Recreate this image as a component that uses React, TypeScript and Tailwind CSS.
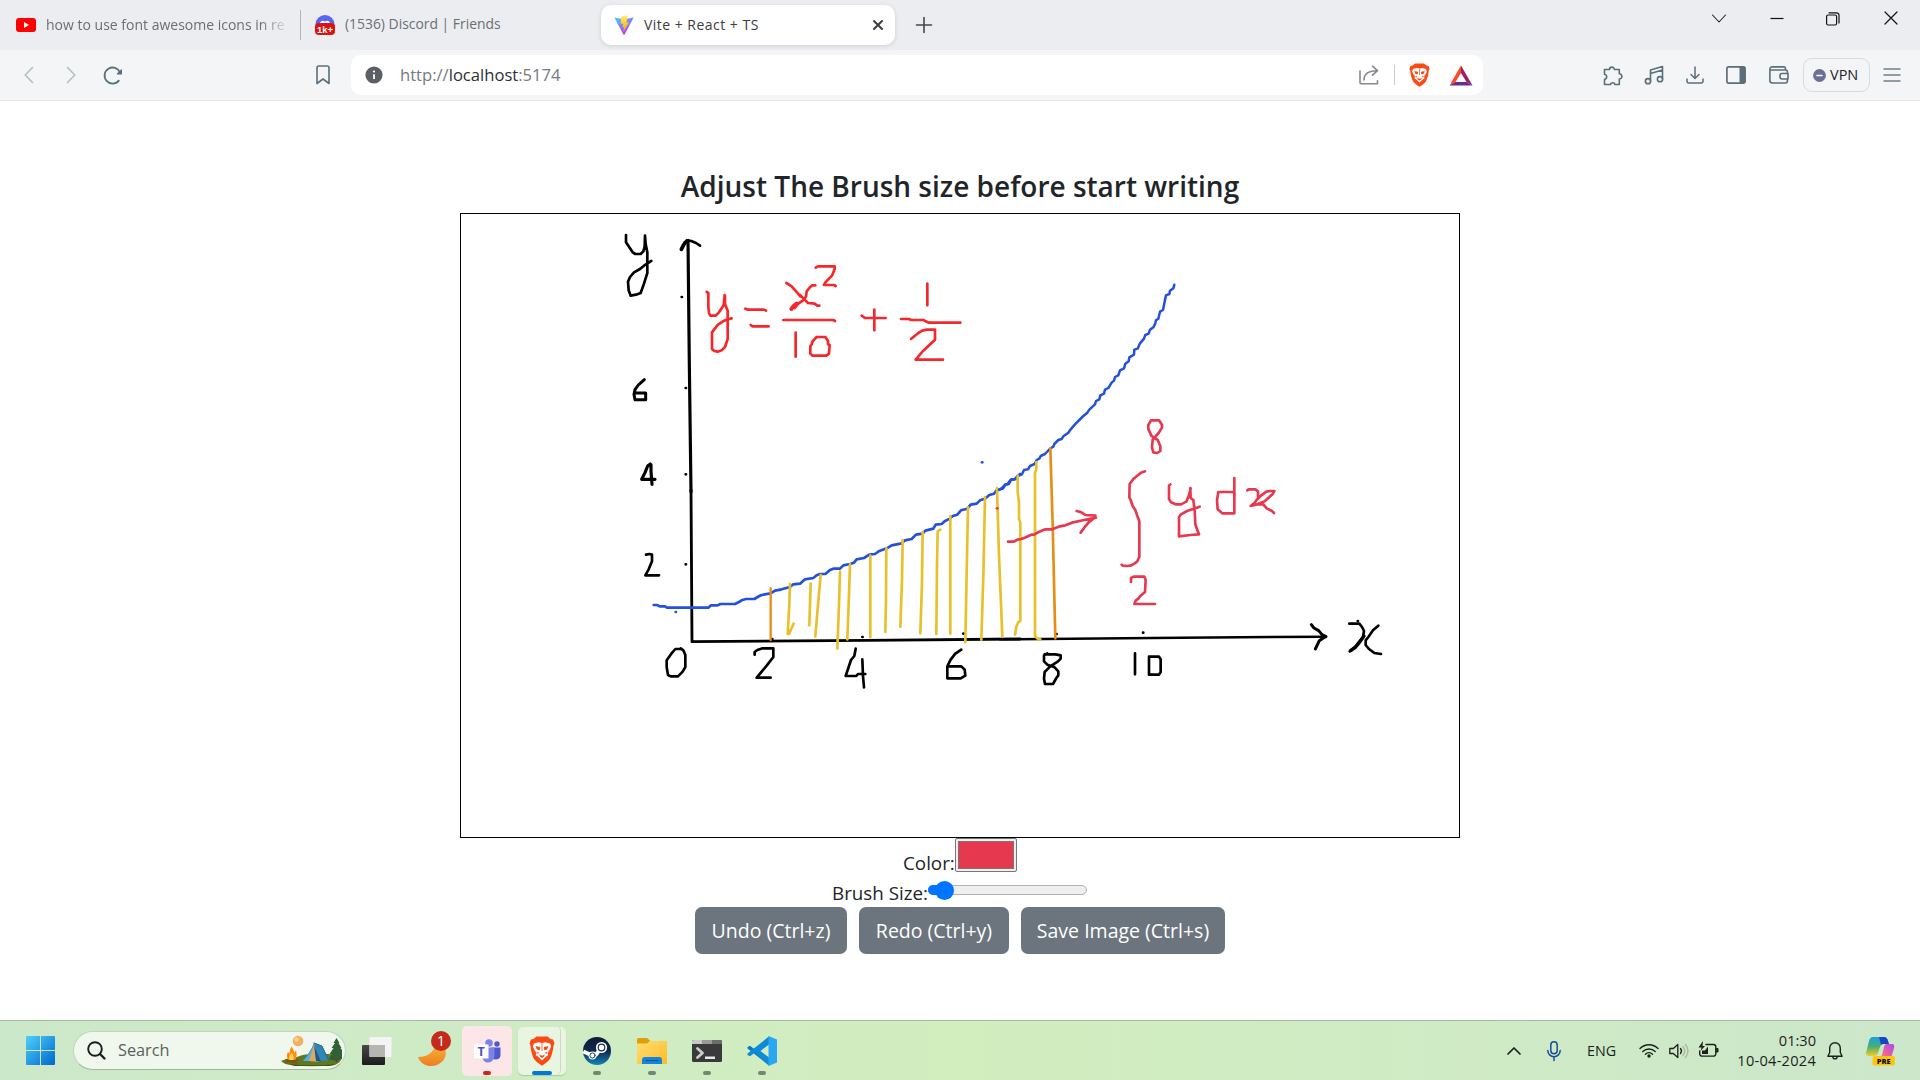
import type { ReactNode } from "react";

const INK = "#5b6f7b";

type IconProps = { box: string; className: string; children: ReactNode };

function Icon({ box, className, children }: IconProps) {
  return (
    <svg viewBox={box} className={`shrink-0 overflow-visible ${className}`} fill="none" strokeLinecap="round" strokeLinejoin="round">
      {children}
    </svg>
  );
}

function BraveLion({ className }: { className: string }) {
  return (
    <svg viewBox="0 0 26 30" preserveAspectRatio="none" className={`shrink-0 ${className}`} fill="none">
      <path d="M7.500 0.500h11l3 2.600 2.600 0.400 1.400 4-1 2.200c-0.400 5-2 10.500-3.600 13.300-1.200 1.900-5.200 5-7.900 6.800-2.700-1.800-6.700-4.900-7.900-6.800C3.500 20.200 1.900 14.700 1.500 9.700L0.500 7.500l1.400-4 2.600-0.400z" fill="#fb4a14" />
      <path d="M5 7.500l4.500-1.200 3.500 0.700 3.500-0.700L21 7.500l1.200 3-1.700 3.500-1.800 2.700 0.500 2.300-2.900 2.300-3.300 3.200-3.300-3.200-2.900-2.300 0.500-2.300L5.500 14l-1.700-3.500z" fill="#fff" />
      <path d="M6.500 10l4.500 0.900 0.300 1.300-1 2.300-2.600-1.200zM19.500 10l-4.500 0.900-0.300 1.300 1 2.300 2.600-1.200zM10 18.500l3 1.200 3-1.200-1.300 2.300L13 22l-1.700-1.200zM12.600 7h0.800v8h-0.800zM7.500 16l2.800 0.500-1.500 1.500zM18.500 16l-2.800 0.500 1.500 1.500z" fill="#fb4a14" />
    </svg>
  );
}

function TabStrip() {
  return (
    <div className="flex h-[50px] items-start bg-[#ecedf1] text-[14px] text-[#6b6e75]">
      <div className="flex h-[50px] w-[300px] items-center pl-4">
        <Icon box="0 0 20 14" className="h-[14px] w-5">
          <rect width="20" height="14" rx="3" fill="#f00" />
          <path d="M8 4l5 3-5 3z" fill="#fff" />
        </Icon>
        <div className="-mt-px ml-[10px] w-[244px] whitespace-nowrap [mask-image:linear-gradient(to_right,black_88%,transparent)]">
          how to use font awesome icons in re
        </div>
      </div>
      <div className="mt-[10px] h-[30px] w-px bg-[#b4b6bb]" />
      <div className="flex h-[50px] w-[300px] items-center pl-[14px]">
        <Icon box="0 0 20 20" className="h-5 w-5">
          <circle cx="10" cy="9.500" r="9.500" fill="#5865f2" />
          <path d="M5 8c1-2 2.500-2.500 3.500-2l1.500 0.400 1.500-0.400c1-0.500 2.500 0 3.500 2v2H5z" fill="#fff" />
          <rect y="8" width="20" height="12" rx="4" fill="#e01010" />
          <text x="10" y="17.500" textAnchor="middle" fontSize="9.500" fontWeight="700" fill="#fff" fontFamily="Liberation Sans, sans-serif">1k+</text>
        </Icon>
        <span className="-mt-px ml-[10px] whitespace-nowrap text-[13.900px]">(1536) Discord | Friends</span>
      </div>
      <div className="mt-[5px] flex h-10 w-[294px] items-center rounded-[10px] bg-white pl-[13px] pr-3 text-[#3b3d42] shadow-[0_1px_4px_rgba(0,0,0,0.12)]">
        <Icon box="0 0 20 20" className="h-5 w-5">
          <defs>
            <linearGradient id="viteShell" x1="0" y1="0" x2="0.600" y2="1">
              <stop offset="0" stopColor="#41d1ff" />
              <stop offset="1" stopColor="#bd34fe" />
            </linearGradient>
            <linearGradient id="viteBolt" x1="0" y1="0" x2="0" y2="1">
              <stop offset="0" stopColor="#ffea83" />
              <stop offset="0.300" stopColor="#ffdd35" />
              <stop offset="1" stopColor="#ffa800" />
            </linearGradient>
          </defs>
          <path d="M0.300 2.500L10 4.200l9.700-1.700L10.500 19.700h-1z" fill="url(#viteShell)" />
          <path d="M14 0.300L7.200 1.600 6.700 9l2.500-0.500-0.700 4 1.700-0.500-0.800 5L15 7.300l-2.600 0.500z" fill="url(#viteBolt)" />
        </Icon>
        <span className="-mt-px ml-[10px] flex-1 whitespace-nowrap tracking-[0.480px]">Vite + React + TS</span>
        <Icon box="0 0 10 10" className="h-[10px] w-[10px]">
          <path d="M1 1l8 8M9 1l-8 8" stroke="#3b3d42" strokeWidth="2" />
        </Icon>
      </div>
      <Icon box="0 0 16 16" className="ml-[21px] mt-[17px] h-4 w-4">
        <path d="M8 0.500v15M0.500 8h15" stroke="#44474d" strokeWidth="1.600" />
      </Icon>
      <Icon box="0 0 14 14" className="ml-auto mt-3 h-[14px] w-[14px]">
        <path d="M0.500 3l6.500 7 6.500-7" stroke="#222" strokeWidth="1.100" />
      </Icon>
      <Icon box="0 0 14 14" className="ml-[44px] mt-3 h-[14px] w-[14px]">
        <path d="M0.500 6.500h13" stroke="#111" strokeWidth="1.200" strokeLinecap="butt" />
      </Icon>
      <Icon box="0 0 14 14" className="ml-[42px] mt-3 h-[14px] w-[14px]">
        <rect x="0.600" y="3" width="10" height="10" rx="1.500" stroke="#111" strokeWidth="1.200" />
        <path d="M3 0.800h7.500a2.500 2.500 0 0 1 2.500 2.500V11" stroke="#111" strokeWidth="1.200" />
      </Icon>
      <Icon box="0 0 14 14" className="ml-[44px] mr-[22px] mt-[11px] h-[14px] w-[14px]">
        <path d="M1 1l12 12M13 1L1 13" stroke="#111" strokeWidth="1.200" />
      </Icon>
    </div>
  );
}

function Toolbar() {
  return (
    <div className="flex h-[51px] items-center border-b border-[#e5e7ea] bg-[#f3f5f7]">
      <Icon box="0 0 10 18" className="ml-6 h-[18px] w-[10px]">
        <path d="M8.500 1.500L1.200 9l7.300 7.500" stroke="#b3bec5" strokeWidth="1.600" />
      </Icon>
      <Icon box="0 0 10 18" className="ml-[32px] h-[18px] w-[10px]">
        <path d="M1.500 1.500L8.800 9l-7.300 7.500" stroke="#b3bec5" strokeWidth="1.600" />
      </Icon>
      <Icon box="0 0 20 20" className="ml-[27px] h-5 w-5">
        <path d="M15.800 15.600A8 8 0 1 1 17 7.500" stroke={INK} strokeWidth="1.800" />
        <path d="M18.400 5v4h-4z" fill={INK} stroke={INK} strokeWidth="1.200" />
      </Icon>
      <Icon box="0 0 14 20" className="ml-[193px] h-5 w-[14px]">
        <path d="M1 2.800A1.800 1.800 0 0 1 2.800 1h8.400A1.800 1.800 0 0 1 13 2.800V18.500l-6-4.500-6 4.500z" stroke={INK} strokeWidth="1.600" />
      </Icon>
      <div className="ml-[21px] flex h-10 w-[1132px] items-center rounded-[10px] bg-white">
        <Icon box="0 0 18 18" className="ml-[14px] h-[18px] w-[18px]">
          <circle cx="9" cy="9" r="8.600" fill="#5b6066" />
          <path d="M9 8.200v4.800" stroke="#fff" strokeWidth="1.800" strokeLinecap="butt" />
          <circle cx="9" cy="5.500" r="1.100" fill="#fff" />
        </Icon>
        <span className="ml-[17px] flex-1 text-[16.600px] text-[#777a80]">
          http://<span className="text-[#2c2f35]">localhost</span>:5174
        </span>
        <Icon box="0 0 20 20" className="h-5 w-5">
          <path d="M1 6v11.500A1.300 1.300 0 0 0 2.300 18.800H18.500v-3" stroke="#85888d" strokeWidth="1.600" />
          <path d="M5 15c0-6 4-9.300 13-9.300M13.500 1.200l5 4.500-5 4.500" stroke="#85888d" strokeWidth="1.600" />
        </Icon>
        <div className="ml-[15px] h-5 w-px bg-[#c9cbd0]" />
        <BraveLion className="ml-[14px] h-6 w-[21px]" />
        <Icon box="0 0 24 21" className="ml-[19px] mr-[10px] h-[21px] w-6">
          <path d="M12 0.500L0.500 20.500l6-3.500L12 8z" fill="#ff4724" />
          <path d="M12 0.500l11.500 20-6-3.500L12 8z" fill="#9e1f63" />
          <path d="M0.500 20.500h23l-6-3.500h-11z" fill="#662d91" />
        </Icon>
      </div>
      <Icon box="0 0 20 20" className="ml-[120px] mt-0.5 h-5 w-5">
        <path d="M1.500 3.500h5a2.400 2.400 0 1 1 4.800 0h5v4.300a2.600 2.600 0 1 1 0 5.200v5.500h-4.300a2.300 2.300 0 0 0-4.500 0h-6v-5a2.700 2.700 0 0 0 0-5.300z" stroke={INK} strokeWidth="1.600" />
      </Icon>
      <Icon box="0 0 20 20" className="ml-[21px] h-5 w-5">
        <path d="M6.500 16V5l12-3.500v12.500M6.500 8.500l12-3.500" stroke={INK} strokeWidth="1.600" />
        <circle cx="4" cy="16.200" r="2.600" stroke={INK} strokeWidth="1.600" />
        <circle cx="16" cy="14.200" r="2.600" stroke={INK} strokeWidth="1.600" />
      </Icon>
      <Icon box="0 0 18 18" className="ml-[22px] h-[18px] w-[18px]">
        <path d="M9 1v11M5 8.500l4 4 4-4M1 13v2a2 2 0 0 0 2 2h12a2 2 0 0 0 2-2v-2" stroke={INK} strokeWidth="1.500" />
      </Icon>
      <Icon box="0 0 20 18" className="ml-[22px] h-[18px] w-5">
        <rect x="0.900" y="0.900" width="18.200" height="16.200" rx="1.500" stroke={INK} strokeWidth="1.700" />
        <rect x="13.500" y="1" width="5.700" height="16" fill={INK} />
      </Icon>
      <Icon box="0 0 20 18" className="ml-[23px] h-[18px] w-5">
        <path d="M16.500 4V2.500A1.700 1.700 0 0 0 14.800 0.900H3A2.100 2.100 0 0 0 0.900 3v11.500A2.500 2.500 0 0 0 3.400 17h13a2 2 0 0 0 2-2V6a2 2 0 0 0-2-2H1.500" stroke={INK} strokeWidth="1.600" />
        <path d="M19 7.500h-6a2 2 0 0 0-2 2V11a2 2 0 0 0 2 2h6z" fill="#f3f5f7" stroke={INK} strokeWidth="1.600" />
      </Icon>
      <div className="ml-[14px] flex h-[34px] w-[67px] items-center rounded-[9px] border border-[#d3dce3] pl-[9px] text-[14.500px] text-[#22252b]">
        <Icon box="0 0 13 13" className="h-[13px] w-[13px]">
          <circle cx="6.500" cy="6.500" r="6.400" fill="#6b7194" />
          <path d="M4 6.500h5" stroke="#fff" strokeWidth="1.500" />
        </Icon>
        <span className="ml-[4px]">VPN</span>
      </div>
      <Icon box="0 0 18 14" className="ml-[13px] h-[14px] w-[18px]">
        <path d="M1 1h16M1 7h16M1 13h16" stroke="#6e808b" strokeWidth="1.500" />
      </Icon>
    </div>
  );
}

/* Freehand strokes are kept in three sheets at three units per pixel. */
function Drawing() {
  return (
    <svg viewBox="461 214 998 623" className="h-[623px] w-[998px]" fill="none" strokeLinecap="round" strokeLinejoin="round" strokeWidth="8">
      {/* upper left: axis, equation */}
      <g transform="translate(600 215) scale(0.33333)">
        <g stroke="#000">
          <path d="M78 60v22l10 15 10 15 8 5h16l8-8 4-14 1-33M135 62l2 25 5 25v62l-10 32-10 28-14 5-16 3-6-16-2-26 6-14 12-14 18-10 12-10 22-14" />
          <path d="M264 76l4 372 5 382" strokeWidth="9.500" />
          <path d="M244 104l6-12 10-16 14 2 14 6 12 8" />
          <path d="M244 103l6-12 6-9" strokeWidth="11" />
          <path d="M133 494l-18 16-10 14-3 14 3 16h32v-20h-33" strokeWidth="9" />
          <path d="M245 246h1M257 519h1" />
        </g>
        <g stroke="#f5272b">
          <path d="M320 231l5 3v40l2 20 4 8h16l10-10 8-12 6-10 3-30M375 242v25l8 20v85l-8 24-10 10-12 4-10-2-7-6v-50l6-8 12-15 15-10 14-6 12-3" />
          <path d="M436 281l8 3h48l6 3M452 330l5 4h49" />
          <path d="M559 204l16 10 14 16 12 14M646 211h-10l-8 8-8 10-2 16-10 12-12 8-12 14M600 240l16 16 8 8 20 2 8 6h6" />
          <path d="M590 266l-10 8-6 8" strokeWidth="12" />
          <path d="M647 158l7-4h50v8l-8 20-20 20-4 8h30l5 3" />
          <path d="M550 315h150l5 3" />
          <path d="M587 353v72M650 366h26l8 12v10l5 2-2 26-8 6h-42l-6-6v-22l4-6 2-8z" />
          <path d="M785 302l10 7h62M823 284v62" />
          <path d="M903 312h24l6 3h38l6 4 10 4h94M982 206v65" />
          <path d="M933 372l22-18 12-7 14-3h24v30l-36 34-22 26h82" />
        </g>
        <path d="M1146 742h1" stroke="#2450dc" />
      </g>

      {/* lower left: curve start, hatching */}
      <g transform="translate(600 440) scale(0.33333)">
        <g stroke="#000">
          <path d="M273 150l3 455 524-4 460-4" strokeWidth="8.500" />
          <path d="M151 72l-8 6-8 20-10 20h40M153 74v20l3 39" strokeWidth="9.500" />
          <path d="M138 344l10-2 8 2v20l-10 24-10 18h41" />
          <path d="M257 103h1M257 373h1M516 597h1M787 591h1M1090 581h1" />
          <path d="M240 627h-14l-12 14-14 20v20l4 24 8 4h22l14-14 8-14v-36l-6-14-8-6" />
          <path d="M464 644v-8l8-6 16-5h32v26l-20 26-30 36h42" />
          <path d="M767 626l-4 22-10 12-16 48h32l5-6h22M787 658l2 50 3 34" />
          <path d="M1084 629l-18 12-14 18-10 20v36h40l14-8-2-18-10-10h-40" />
        </g>
        <g stroke="#2450dc">
          <path d="M161 495L171 495 179 499 195 499 201 503 325 503 333 496 353 496 361 492 405 492 417 486 425 481 438 477 463 477 478 468 485 465 512 460 525 452 545 448 570 441 580 433 600 431 615 418 640 414 650 406 660 402 676 402 690 390 700 386 720 386 730 376 750 372 762 368 770 358 792 354 808 344 825 342 836 334 860 325 875 316 905 310 915 301 935 297 948 284 968 281 976 272 1000 266 1007 254 1025 252 1035 243 1050 236 1058 228 1072 224 1083 211 1102 206 1112 194 1130 191 1140 181 1155 176 1168 165 1182 161 1190 150 1208 146 1216 134 1226 132 1233 119 1246 117 1260 102" />
          <path d="M227 516h1" />
        </g>
        <g stroke="#e8c02c">
          <path d="M570 432l-2 60-5 90h4l8-18 6-13M632 431l-2 60-2 65M662 405l-8 90-8 94M720 395l-3 100-5 130M750 373l-3 90-5 135M811 347v245M859 325l-1 150-2 101M908 300l-2 120-5 140M968 276l-2 150-5 154M1021 269l-8 5-2 100-2 208M1051 228v353M1104 202l-4 200-4 205M1155 171l-5 240-6 188M1191 144l6 200 10 246" />
        </g>
        <path d="M512 445v155" stroke="#e88c14" strokeWidth="7" />
        <path d="M1191 205h1" stroke="#e63946" />
      </g>

      {/* right: curve end, integral */}
      <g transform="translate(1000 260) scale(0.33333)">
        <g stroke="#000">
          <path d="M0 1138l540-5 437-3" strokeWidth="7.500" />
          <path d="M934 1094l8 10 14 8 10 12 12 6-8 4-12 8-12 25" strokeWidth="9" />
          <path d="M405 1180v63M447 1190h30l5 8v38l-5 8h-30z" />
          <path d="M142 1180l-10 6v18l10 10 22 8 11 12v12l-6 8-10 18h-24l-3-16 2-20 16-16 24-16 8-8v-10l-16-3h-32" />
          <path d="M1048 1091h30l8 10 6 12-3 18-10 12-12 16-18 15M1135 1097l-16 14-14 20-8 10v14l10 12 16 12 20 3" />
          <path d="M1092 1128l-14 20-12 14-14 10" strokeWidth="10" />
          <path d="M1073 1083h1M169 1122h1M429 1118h1" />
        </g>
        <path d="M-3 690L5 685 14 675 22 672 32 660 45 658 52 648 66 643 72 630 84 628 90 618 104 612 110 600 118 596 122 588 135 582 151 565 160 560 163 552 175 540 185 537 190 529 205 518 212 508 225 493 250 468 262 458 268 449 285 433 288 423 298 418 301 406 312 401 315 389 325 384 335 368 342 362 345 351 355 346 360 331 372 325 376 311 386 304 388 292 402 284 403 269 413 266 420 250 432 236 436 225 446 221 450 209 460 202 466 190 468 181 475 176 480 155 489 150 494 125 498 106 508 102 510 92 520 85 523 74" stroke="#2450dc" strokeWidth="7.500" />
        <g stroke="#e8c02c">
          <path d="M53 647v50l4 30v50l4 10v296l-6 3-6 14-4 24M109 606v20l-4 14v488l10 10h6" />
        </g>
        <path d="M151 565l7 230 8 340" stroke="#e88c14" />
        <g stroke="#e63950">
          <path d="M24 845h18l10-6 12-2 10-4 20-9h8l14-8 20-8h20l20-8 20-4 20-8 36-8 36-7M230 753l14 4 12 8 30 2-2 6-18 14-10 12-14 19" />
          <path d="M464 535l-10-8-9-20v-12l8-14h24l9 14v8l-10 16-18 20-2 24 4 14 12 2 9-6v-14l-8-20-9-4" />
          <path d="M435 634l-12 4-22 18-12 16-1 40 4 8 6 18 8 12 6 18 6 16v106l-6 14-8 6-10 6-12 2-14-1-3-3" />
          <path d="M393 966v-12l8-4h32l4 10-2 36-14 12-6 8-8 6-4 10h62" />
          <path d="M511 673l-4 4v40l6 10 14 6h16l16-8 8-20 5-20M571 684l1 30 8 6 4 30 2 42 5 16 6 15-26 2-34 4v-58l6-8 18-10 18-6 20-7" />
          <path d="M703 654v106h-36l-14-12-2-28 4-24h44l5 6" />
          <path d="M742 691l4-3h20l8 6v20l-10 14-12 10 16-4 26-10 24-22 5-9h-12l-12 2-16 12-10 10M770 733h20l10 12 16 8 6 6" />
        </g>
      </g>
    </svg>
  );
}

function Page() {
  return (
    <main className="flex h-[919px] flex-col items-center bg-white pt-[61px] text-[#212529]">
      <h1 className="flex h-[51px] w-full items-start justify-center whitespace-nowrap pt-[10px] text-[28px] font-semibold leading-none">
        Adjust The Brush size before start writing
      </h1>
      <div className="h-[625px] w-[1000px] border border-black">
        <Drawing />
      </div>
      <div className="flex h-[34px] items-start text-[18.800px] leading-6">
        <span className="mt-[13px] w-[52px] whitespace-nowrap">Color:</span>
        <div className="h-[34px] w-[62px] rounded-[2px] border border-[#767676] bg-[#efefef] p-[2px]">
          <div className="h-full w-full border border-[#777] bg-[#e63950]" />
        </div>
      </div>
      <div className="flex h-[35px] items-start text-[18.800px] leading-6">
        <span className="mt-[9px] w-[95px] whitespace-nowrap">
          <span className="-ml-px">Brush Size:</span>
        </span>
        <div className="mt-[13px] flex h-[10px] w-[159px] items-center rounded-full border border-[#b2b2b2] bg-[#efefef]">
          <div className="-ml-px h-[10px] w-[10px] shrink-0 rounded-l-full bg-[#0075ff]" />
          <div className="-ml-[3px] h-[19px] w-[19px] shrink-0 rounded-full bg-[#0075ff]" />
        </div>
      </div>
      <div className="flex gap-3 text-[19.500px] text-white">
        <button className="h-[47px] w-[152px] whitespace-nowrap rounded-[7px] bg-[#6c757d] pt-px">Undo (Ctrl+z)</button>
        <button className="h-[47px] w-[150px] whitespace-nowrap rounded-[7px] bg-[#6c757d] pt-px">Redo (Ctrl+y)</button>
        <button className="h-[47px] w-[204px] whitespace-nowrap rounded-[7px] bg-[#6c757d] pt-px">Save Image (Ctrl+s)</button>
      </div>
    </main>
  );
}

type SlotProps = { width: string; mark?: string; children: ReactNode };

function Slot({ width, mark, children }: SlotProps) {
  return (
    <div className={`relative flex h-[50px] shrink-0 items-center justify-center ${width}`}>
      {children}
      {mark && <div className={`absolute bottom-[1px] left-1/2 h-1 -translate-x-1/2 rounded-full ${mark}`} />}
    </div>
  );
}

function Taskbar() {
  return (
    <footer className="flex h-[60px] items-center border-t border-[#a9b9a4] bg-linear-to-r from-[#cce8ca] via-[#d2eebf] to-[#cce7ca] text-[#1c1f1c]">
      <Icon box="0 0 29 29" className="ml-[26px] h-[29px] w-[29px]">
        <defs>
          <linearGradient id="win" x1="0" y1="0" x2="29" y2="29" gradientUnits="userSpaceOnUse">
            <stop offset="0" stopColor="#4fd0fb" />
            <stop offset="1" stopColor="#0067cc" />
          </linearGradient>
        </defs>
        <path d="M1 0h13v14H0V1a1 1 0 0 1 1-1zM15 0h13a1 1 0 0 1 1 1v13H15zM0 15h14v14H1a1 1 0 0 1-1-1zM15 15h14v13a1 1 0 0 1-1 1H15z" fill="url(#win)" />
      </Icon>
      <div className="ml-[18px] flex h-[39px] w-[273px] items-center rounded-full border border-[#bcd8b8] border-b-[#9fb99b] bg-[#f0f8ed]">
        <Icon box="0 0 19 19" className="ml-[13px] h-[19px] w-[19px]">
          <circle cx="8" cy="8" r="6.800" stroke="#1d1d1d" strokeWidth="1.900" />
          <path d="M13 13l4.500 4.500" stroke="#1d1d1d" strokeWidth="2.400" />
        </Icon>
        <span className="ml-[12px] flex-1 text-[16.300px] text-[#5a615a]">Search</span>
        <Icon box="282 1036 62 31" className="mr-[2px] h-[31px] w-[62px]">
          <path d="M282 1062q6-3 16-4 6-3 16-3 24-1 28 4 1 5-8 7.500-22 1.500-40 0-9-1-12-4.500z" fill="#5f7a1e" />
          <path d="M290 1065q22 3 48 0l-8 2h-34z" fill="#3c4c12" />
          <circle cx="299" cy="1042" r="5.300" fill="#f2ae62" />
          <circle cx="297.500" cy="1040.500" r="2.300" fill="#f8cf96" />
          <path d="M315 1044l8 3 7 15-26-1q7-7 11-17z" fill="#2f87b8" />
          <path d="M315 1044l-4 18h-7q7-7 11-17z" fill="#58b0d6" />
          <path d="M315 1045l-5 17 11 1z" fill="#d9a96c" />
          <path d="M315 1046l2 16 5 1z" fill="#1d567c" />
          <path d="M315 1044l8 3 7 15" stroke="#1f6690" strokeWidth="1" />
          <path d="M337.500 1039l-3 5h1.500l-3.500 5h2l-4 6h2l-2.500 5q6 3 13 0v-9l-1.500-2h1l-3-5h1z" fill="#2f6135" />
          <path d="M336.500 1060h2v3h-2z" fill="#6b4020" />
          <path d="M292.500 1047.500q2.500 4 3 6l1.500-2q1.500 5-0.500 9.500h-7q-3-4-0.500-8l1.500 1.500q0-4 2-7z" fill="#ff8a16" />
          <path d="M292.500 1054q3 3 2 7h-4q-1-4 2-7z" fill="#ffd94a" />
          <path d="M287 1063l12-2M287 1061l11 3" stroke="#8c4a1e" strokeWidth="1.500" />
        </Icon>
      </div>
      <Icon box="0 0 30 28" className="ml-4 h-7 w-[30px]">
        <defs>
          <linearGradient id="tvDark" x1="0" y1="0" x2="0" y2="1">
            <stop offset="0" stopColor="#484848" />
            <stop offset="1" stopColor="#1b1b1b" />
          </linearGradient>
        </defs>
        <rect y="8" width="23" height="20" rx="1" fill="url(#tvDark)" />
        <rect x="7.500" y="0" width="22" height="20" rx="1" fill="#f4f4f4" />
        <rect x="7.500" y="8" width="15.500" height="12" fill="#b5b5b2" />
      </Icon>
      <Icon box="418 1029 34 36" className="-mt-1 ml-[26px] h-9 w-[34px]">
        <defs>
          <linearGradient id="moon" x1="0" y1="0" x2="0" y2="1">
            <stop offset="0" stopColor="#f6b53c" />
            <stop offset="1" stopColor="#ee7d1e" />
          </linearGradient>
        </defs>
        <path d="M418 1055q14 0 18-13l9 4q3 9-4 14.500-6 5-14 3-7-2-9-8.500z" fill="url(#moon)" />
        <circle cx="441" cy="1039" r="10" fill="#c42b1c" />
        <text x="441" y="1043.500" textAnchor="middle" fontSize="14" fill="#fff" fontFamily="Open Sans, sans-serif">1</text>
      </Icon>
      <div className="ml-[10px] rounded-[5px] bg-[#fce6e7]">
        <Slot width="w-[50px]" mark="w-2 bg-[#c42b1c]">
          <Icon box="0 0 27 24" className="h-6 w-[27px]">
            <circle cx="15" cy="4" r="3.800" fill="#7b83eb" />
            <circle cx="23" cy="5" r="2.700" fill="#5059c9" />
            <path d="M17 8.500h9.500v7.500q0 4-4.500 4.500-5 0-5-5z" fill="#5059c9" />
            <path d="M8 8.500h12.500v8.500q-1 6-6.500 6.500-5 0-6-6z" fill="#7b83eb" />
            <rect x="0" y="5.500" width="14.500" height="14" rx="0.500" fill="#fff" />
            <text x="7.200" y="17" textAnchor="middle" fontSize="12.500" fontWeight="700" fill="#4b53bc" fontFamily="Open Sans, sans-serif">T</text>
          </Icon>
        </Slot>
      </div>
      <div className="ml-[6px] rounded-[5px] bg-[#e8f5e1] pr-[5px] shadow-[0_1px_1px_rgba(60,100,60,0.25)]">
        <div className="flex h-12">
          <div className="-mt-px w-[43px] rounded-[5px] border-r border-[#c9dcc2]">
            <Slot width="w-12" mark="w-5 bg-[#0078d4]">
              <BraveLion className="h-[30px] w-[26px]" />
            </Slot>
          </div>
        </div>
      </div>
      <div className="ml-[3px] flex">
        <Slot width="w-[55px]" mark="w-2 bg-[#75876f]">
          <Icon box="0 0 28 28" className="h-7 w-7">
            <defs>
              <linearGradient id="steam" x1="0" y1="0" x2="0" y2="1">
                <stop offset="0" stopColor="#111a35" />
                <stop offset="0.500" stopColor="#10284c" />
                <stop offset="1" stopColor="#1485b8" />
              </linearGradient>
            </defs>
            <circle cx="14" cy="14" r="14" fill="url(#steam)" />
            <path d="M0.300 14.500l8 3.500 5-0.500 4-6" stroke="#fff" strokeWidth="4" strokeLinecap="butt" />
            <circle cx="9.500" cy="18.500" r="4" fill="#fff" />
            <circle cx="9.500" cy="18.500" r="2.600" fill="#fff" stroke="#17406a" strokeWidth="1" />
            <circle cx="18.500" cy="10.500" r="4.600" fill="#fff" stroke="#fff" strokeWidth="2" />
            <circle cx="18.500" cy="10.500" r="3.300" fill="#fff" stroke="#17305a" strokeWidth="1.200" />
          </Icon>
        </Slot>
        <Slot width="w-[55px]" mark="w-2 bg-[#75876f]">
          <Icon box="0 0 30 26" className="h-[26px] w-[30px]">
            <defs>
              <linearGradient id="folder" x1="0" y1="0" x2="1" y2="1">
                <stop offset="0" stopColor="#ffdf72" />
                <stop offset="1" stopColor="#fdbb24" />
              </linearGradient>
            </defs>
            <path d="M0 1.500A1.500 1.500 0 0 1 1.500 0H10l3 2.500V8H0z" fill="#dea00c" />
            <path d="M0 5.500h10L13 3h16a1 1 0 0 1 1 1v21a1 1 0 0 1-1 1H1a1 1 0 0 1-1-1z" fill="url(#folder)" />
            <path d="M5 26v-4a3 3 0 0 1 3-3h14a3 3 0 0 1 3 3v4z" fill="#1384dc" />
            <path d="M9 22.500h12" stroke="#0d4e8e" strokeWidth="1" />
          </Icon>
        </Slot>
        <Slot width="w-[55px]" mark="w-2 bg-[#75876f]">
          <Icon box="0 0 30 22" className="h-[22px] w-[30px]">
            <rect width="30" height="22" rx="1.500" fill="#3a3a3a" />
            <path d="M1.500 0H10v4H0V1.500A1.500 1.500 0 0 1 1.500 0z" fill="#c8c8c8" />
            <rect x="10" width="10" height="4" fill="#9a9a9a" />
            <path d="M20 0h8.500A1.500 1.500 0 0 1 30 1.500V4H20z" fill="#6c6c6c" />
            <path d="M5.500 8.500l5 4.500-5 4.500" stroke="#ccc" strokeWidth="2.800" />
            <rect x="13" y="16.500" width="10" height="2.500" fill="#e8e8e8" />
          </Icon>
        </Slot>
        <Slot width="w-[55px]" mark="w-2 bg-[#75876f]">
          <Icon box="0 0 30 30" className="h-[30px] w-[30px]">
            <path d="M22 0.500L8 13.500 3 9.800 0.500 11v1.500l21.500 17z" fill="#0a7cc4" />
            <path d="M22 29.500L8 16.500l-5 3.700L0.500 19v-1.500L22 0.500z" fill="#0f8ad6" />
            <path d="M22 8.500v13L13.500 15z" fill="#d1edc3" />
            <path d="M21.500 0l8.500 3.500v23L21.500 30z" fill="#2aa7f2" />
          </Icon>
        </Slot>
      </div>

      <Icon box="0 0 14 8" className="ml-auto h-2 w-[14px]">
        <path d="M1 7l6-6 6 6" stroke="#1c1f1c" strokeWidth="1.700" />
      </Icon>
      <Icon box="0 0 14 20" className="ml-[26px] h-5 w-[14px]">
        <rect x="3.800" y="0.800" width="6.400" height="12" rx="3.200" stroke="#1b4d9b" strokeWidth="1.500" />
        <path d="M0.800 9.500a6.200 6.200 0 0 0 12.400 0M7 16v3.500" stroke="#1b4d9b" strokeWidth="1.500" />
      </Icon>
      <span className="ml-[26px] w-[30px] text-[14.300px]">ENG</span>
      <Icon box="0 0 20 15" className="ml-[22px] h-[15px] w-5">
        <path d="M1 5.500a12.700 12.700 0 0 1 18 0M3.800 8.500a8.800 8.800 0 0 1 12.400 0M6.500 11.200a5 5 0 0 1 7 0" stroke="#1c1f1c" strokeWidth="1.400" />
        <circle cx="10" cy="13" r="1.700" fill="#1c1f1c" />
      </Icon>
      <Icon box="0 0 20 16" className="ml-[10px] h-4 w-5">
        <path d="M0.800 5.500h3.500l4.500-4v13l-4.500-4H0.800z" stroke="#1c1f1c" strokeWidth="1.300" />
        <path d="M11.500 5.500q2 2.500 0 5" stroke="#1c1f1c" strokeWidth="1.300" />
        <path d="M14 3.500q3.500 4.500 0 9M16.500 1.500q5 6.500 0 13" stroke="#a6b8a0" strokeWidth="1.300" />
      </Icon>
      <Icon box="0 0 21 17" className="-mt-0.5 ml-[9px] h-[17px] w-[21px]">
        <path d="M8 3.500h7.500a2.300 2.300 0 0 1 2.300 2.300v7a2.300 2.300 0 0 1-2.300 2.300H4a2.300 2.300 0 0 1-2.300-2.300V10" stroke="#1c1f1c" strokeWidth="1.400" />
        <path d="M18.500 7.500h1.500v3.500h-1.500z" fill="#1c1f1c" stroke="#1c1f1c" />
        <path d="M4 13V9.500h3l3-4v7.500zM5 0L0.500 6.500h3L2.500 10l4.500-5H4.500z" fill="#1c1f1c" />
      </Icon>
      <div className="-mt-0.5 ml-[17px] w-[80px] text-right text-[14.600px] leading-[20px]">
        <div>01:30</div>
        <div className="whitespace-nowrap tracking-[0.250px]">10-04-2024</div>
      </div>
      <Icon box="0 0 16 18" className="ml-[11px] h-[18px] w-4">
        <path d="M8 0.800a5.300 5.300 0 0 0-5.300 5.300v4.400L0.900 14.300h14.200l-1.800-3.800V6.100A5.300 5.300 0 0 0 8 0.800zM5.800 14.500a2.200 2.400 0 0 0 4.400 0" stroke="#1c1f1c" strokeWidth="1.400" />
      </Icon>
      <Icon box="0 0 29 29" className="ml-[23px] mr-[25px] mt-0.5 h-[29px] w-[29px]">
        <defs>
          <linearGradient id="cpLeft" x1="0" y1="0" x2="0" y2="1">
            <stop offset="0" stopColor="#1b9fe8" />
            <stop offset="0.500" stopColor="#4aae72" />
            <stop offset="1" stopColor="#f0cd26" />
          </linearGradient>
          <linearGradient id="cpRight" x1="1" y1="0" x2="0" y2="1">
            <stop offset="0" stopColor="#a44cf0" />
            <stop offset="0.600" stopColor="#f0609a" />
            <stop offset="1" stopColor="#ff8b62" />
          </linearGradient>
        </defs>
        <path d="M7 0h11q3 0 4 4l1 3h-6q-2 0-3 3l-2 6q-1 3-4 3H3q-3 0-3-3L3 4q1-4 4-4z" fill="url(#cpLeft)" />
        <path d="M13 0h5q3 0 4 4l1 3h-6q-1 0-2 1z" fill="#1946c8" />
        <path d="M20 7h6q3 0 2 4l-2 7q-1 4-4 4h-9q2-1 3-4l2-8q1-3 2-3z" fill="url(#cpRight)" />
        <rect x="6.500" y="19" width="22.500" height="9.500" rx="2" fill="#fcc60e" />
        <text x="17.700" y="26.500" textAnchor="middle" fontSize="7.500" fontWeight="800" fill="#111" fontFamily="Open Sans, sans-serif">PRE</text>
      </Icon>
    </footer>
  );
}

export default function App() {
  return (
    <div className="flex h-[1080px] w-[1920px] flex-col overflow-hidden bg-white font-['Open_Sans','Noto_Sans',sans-serif]">
      <TabStrip />
      <Toolbar />
      <Page />
      <Taskbar />
    </div>
  );
}
